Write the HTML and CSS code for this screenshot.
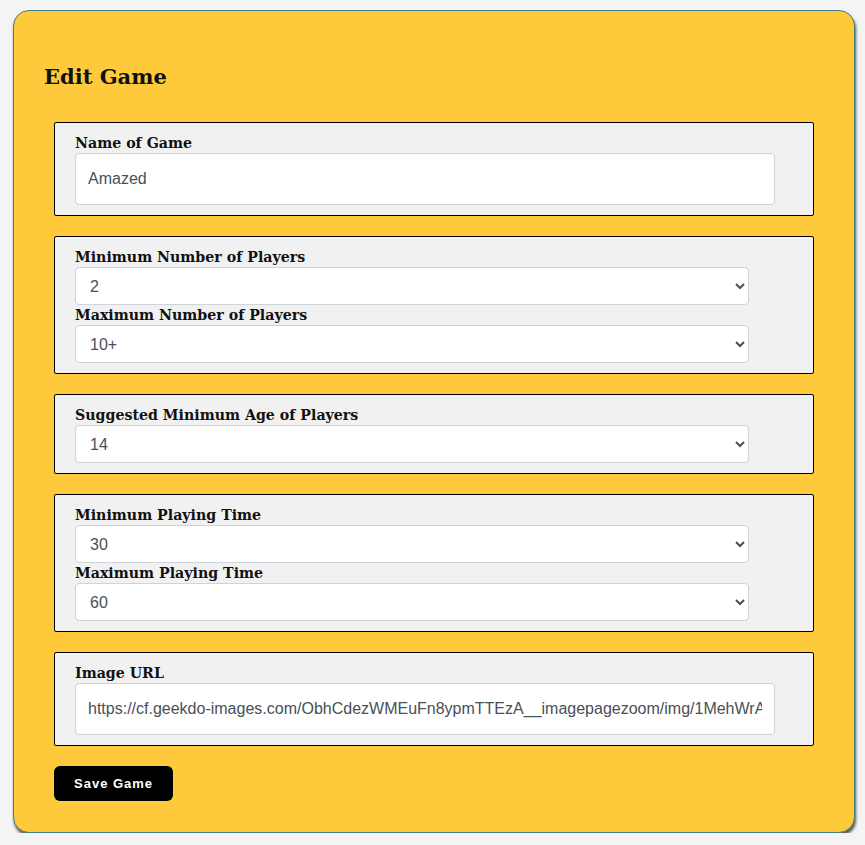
FILE: index.html
```html
<!DOCTYPE html>
<html>
<head>
<meta charset="utf-8">
<link rel="stylesheet" href="styles.css">
</head>
<body>
<div class="card">
  <h1 class="title">Edit Game</h1>
  <form class="form">
    <div class="group">
      <label class="label">Name of Game</label>
      <input class="text-input" type="text" value="Amazed">
    </div>
    <div class="group">
      <label class="label">Minimum Number of Players</label>
      <select class="select"><option>2</option></select>
      <label class="label">Maximum Number of Players</label>
      <select class="select"><option>10+</option></select>
    </div>
    <div class="group">
      <label class="label">Suggested Minimum Age of Players</label>
      <select class="select"><option>14</option></select>
    </div>
    <div class="group">
      <label class="label">Minimum Playing Time</label>
      <select class="select"><option>30</option></select>
      <label class="label">Maximum Playing Time</label>
      <select class="select"><option>60</option></select>
    </div>
    <div class="group">
      <label class="label">Image URL</label>
      <input class="text-input" type="text" value="https://cf.geekdo-images.com/ObhCdezWMEuFn8ypmTTEzA__imagepagezoom/img/1MehWrAx">
    </div>
    <div class="actions">
      <button class="btn" type="button">Save Game</button>
    </div>
  </form>
</div>
</body>
</html>
```
FILE: styles.css
```css
html, body {
  margin: 0;
  padding: 0;
  background: #f4f4f4;
}
body {
  padding: 10px 10px 0 13px;
  font-family: "DejaVu Serif", serif;
}
.card {
  width: 842px;
  box-sizing: border-box;
  height: 823px;
  background: #ffc93c;
  border: 1px solid #3f7f86;
  border-radius: 16px;
  box-shadow: 1px 3px 3px #555;
  padding: 1px 40px 0 40px;
}
.title {
  margin: 49px 0 0 -10px;
  font-size: 21px;
  line-height: 32px;
  font-weight: bold;
  color: #111;
}
.form {
  margin-top: 29px;
  display: flex;
  flex-direction: column;
  gap: 20px;
}
.group {
  width: 760px;
  box-sizing: border-box;
  background: #f1f1f1;
  border: 1px solid #000;
  border-radius: 2px;
  padding: 10px 20px 10px 20px;
  display: flex;
  flex-direction: column;
  align-items: flex-start;
}
.label {
  font-size: 14.2px;
  font-weight: bold;
  line-height: 20px;
  color: #111;
  height: 20px;
  display: block;
}
.text-input {
  width: 700px;
  height: 52px;
  box-sizing: border-box;
  border: 1px solid #ced4da;
  border-radius: 4px;
  background: #fff;
  padding: 0 12px;
  font-family: "Liberation Sans", Arial, sans-serif;
  font-size: 16px;
  color: #495057;
  margin: 0;
}
.select {
  width: 674px;
  height: 38px;
  box-sizing: border-box;
  border: 1px solid #ced4da;
  border-radius: 4px;
  background: #fff;
  padding: 0 10px;
  font-family: "Liberation Sans", Arial, sans-serif;
  font-size: 16px;
  color: #495057;
  margin: 0;
}
.actions {
  display: flex;
}
.btn {
  height: 35px;
  padding: 0 20px;
  background: #000;
  color: #fff;
  border: none;
  border-radius: 6px;
  font-family: "Liberation Sans", Arial, sans-serif;
  font-size: 13px;
  font-weight: bold;
  letter-spacing: 1px;
}
```
